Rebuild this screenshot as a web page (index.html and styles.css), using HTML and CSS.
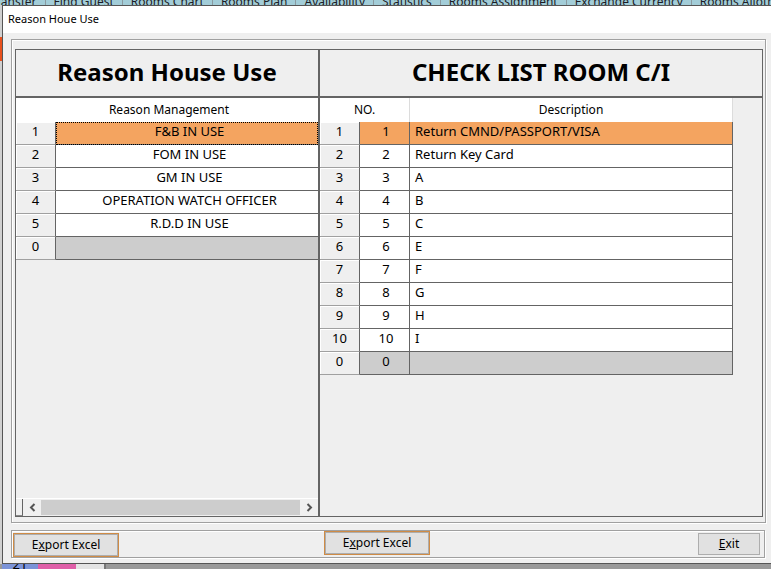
FILE: index.html
```html
<!DOCTYPE html>
<html lang="en">
<head>
<meta charset="utf-8">
<title>Reason Houe Use</title>
<link rel="stylesheet" href="styles.css">
</head>
<body>
<nav class="menu">
  <a href="#">Transfer</a><a href="#">Find Guest</a><a href="#">Rooms Chart</a><a href="#">Rooms Plan</a><a href="#">Availability</a><a href="#">Statistics</a><a href="#">Rooms Assignment</a><a href="#">Exchange Currency</a><a href="#">Rooms Allotment</a>
</nav>
<div class="middle">
  <div class="behind"><span class="mark"></span></div>
  <main class="dialog">
    <h1 class="titlebar">Reason Houe Use</h1>
    <div class="content">
      <section class="group lists">
        <div class="panels">
          <section class="panel reasons">
            <h2>Reason House Use</h2>
            <div class="body">
              <table>
                <colgroup><col class="c-head"><col></colgroup>
                <thead><tr><th colspan="2">Reason Management</th></tr></thead>
                <tbody>
                  <tr class="selected focus"><th>1</th><td>F&amp;B IN USE</td></tr>
                  <tr><th>2</th><td>FOM IN USE</td></tr>
                  <tr><th>3</th><td>GM IN USE</td></tr>
                  <tr><th>4</th><td>OPERATION WATCH OFFICER</td></tr>
                  <tr><th>5</th><td>R.D.D IN USE</td></tr>
                  <tr class="blank"><th>0</th><td></td></tr>
                </tbody>
              </table>
              <div class="scroll">
                <span class="split"></span>
                <button type="button" aria-label="Scroll left"><svg width="7" height="9" viewBox="0 0 7 9"><path d="M5.500 1 2 4.500 5.500 8"/></svg></button>
                <span class="thumb"></span>
                <button type="button" aria-label="Scroll right"><svg width="7" height="9" viewBox="0 0 7 9"><path d="M1.500 1 5 4.500 1.500 8"/></svg></button>
              </div>
            </div>
          </section>
          <section class="panel checks">
            <h2>CHECK LIST ROOM C/I</h2>
            <div class="body">
              <table>
                <colgroup><col class="c-head"><col class="c-no"><col></colgroup>
                <thead><tr><th colspan="2">NO.</th><th>Description</th></tr></thead>
                <tbody>
                  <tr class="selected"><th>1</th><td>1</td><td>Return CMND/PASSPORT/VISA</td></tr>
                  <tr><th>2</th><td>2</td><td>Return Key Card</td></tr>
                  <tr><th>3</th><td>3</td><td>A</td></tr>
                  <tr><th>4</th><td>4</td><td>B</td></tr>
                  <tr><th>5</th><td>5</td><td>C</td></tr>
                  <tr><th>6</th><td>6</td><td>E</td></tr>
                  <tr><th>7</th><td>7</td><td>F</td></tr>
                  <tr><th>8</th><td>8</td><td>G</td></tr>
                  <tr><th>9</th><td>9</td><td>H</td></tr>
                  <tr><th>10</th><td>10</td><td>I</td></tr>
                  <tr class="blank"><th>0</th><td>0</td><td></td></tr>
                </tbody>
              </table>
            </div>
          </section>
        </div>
      </section>
      <footer class="group actions">
        <button type="button" class="btn hot">E<u>x</u>port Excel</button>
        <button type="button" class="btn hot second">E<u>x</u>port Excel</button>
        <button type="button" class="btn exit"><u>E</u>xit</button>
      </footer>
    </div>
  </main>
</div>
<div class="below"><span class="day">21</span><span class="pink"></span><span class="pale"></span></div>
</body>
</html>
```
FILE: styles.css
```css
* { box-sizing: border-box; }
body {
  margin: 0;
  height: 100vh;
  display: flex;
  flex-direction: column;
  overflow: hidden;
  background: #999;
  color: #000;
  font: 13px/16px "Noto Sans", sans-serif;
}
.menu {
  flex: none;
  height: 5px;
  display: flex;
  overflow: hidden;
  background: #a3cdd8;
  margin-left: -18px;
  font-size: 12px;
}
.menu a {
  flex: none;
  height: 16px;
  margin-top: -6px;
  padding: 0 8px;
  border-right: 1px solid #8a9aa0;
  color: #1c1c24;
  text-decoration: none;
  white-space: nowrap;
}
.middle { flex: 1; min-height: 0; display: flex; }
.behind { flex: none; width: 2px; background: #d0d0d0; padding-top: 32px; }
.mark { display: block; height: 24px; background: #e8501c; }
.dialog {
  flex: 1;
  min-width: 0;
  display: flex;
  flex-direction: column;
  background: #efefef;
  border: solid #555;
  border-width: 1px 0 1px 1px;
}
.titlebar {
  margin: 0;
  padding: 5px;
  height: 27px;
  background: #fff;
  font: 11px/16px "Noto Sans", sans-serif;
}
.content {
  flex: 1;
  min-height: 0;
  display: flex;
  flex-direction: column;
  gap: 7px;
  padding: 6px 5px 5px 8px;
}
.group { border: 1px solid #a0a0a0; box-shadow: 1px 1px 0 #fff, inset 1px 1px 0 #fff; }
.lists { flex: 1; min-height: 0; padding: 9px 2px 5px 3px; }
.panels { height: 100%; display: grid; grid-template-columns: 305px 1fr; }
.panel {
  display: flex;
  flex-direction: column;
  min-width: 0;
  border: solid #646464;
  border-width: 1px 0 1px 1px;
}
.panel + .panel { border-width: 1px 1px 1px 0; }
.reasons { border-right-width: 2px; }
h2 {
  margin: 0;
  height: 48px;
  border-bottom: 2px solid #646464;
  font: bold 24px/44px "Noto Sans", sans-serif;
  text-align: center;
}
.body { flex: 1; display: flex; flex-direction: column; justify-content: space-between; align-items: flex-start; }
table { border-collapse: separate; border-spacing: 0; table-layout: fixed; width: 100%; }
.checks table { width: calc(100% - 29px); }
.c-head { width: 40px; }
.c-no { width: 50px; }
th, td { padding: 0; text-align: center; font-weight: normal; white-space: nowrap; }
thead th { height: 24px; background: #fff; border-right: 1px solid #dcdcdc; font-size: 12px; }
.reasons thead th { border-right: 0; padding-left: 4px; }
tbody th {
  height: 23px;
  padding-bottom: 5px;
  background: #efefef;
  border-bottom: 1px solid #a0a0a0;
  border-right: 1px solid #646464;
  box-shadow: inset 1px 1px 0 #fff;
}
tbody td { height: 23px; padding-bottom: 4px; background: #fff; border-bottom: 1px solid #646464; }
.reasons td { padding-left: 5px; }
.checks td { border-right: 1px solid #646464; padding-left: 3px; }
.checks td:last-child { text-align: left; padding-left: 5px; }
.selected td { background: #f4a460; }
.focus td { outline: 1px dotted #000; outline-offset: -1px; }
.blank td { background: #cdcdcd; }
.scroll { width: 100%; height: 18px; border-top: 1px solid #fff; display: flex; }
.split { width: 7px; border-right: 1px solid #646464; border-bottom: 1px solid #888; }
.scroll button { width: 18px; padding: 0; border: 0; background: #f0f0f0; display: grid; place-items: center; }
.scroll svg { fill: none; stroke: #555; stroke-width: 2; }
.thumb { flex: 1; height: 15px; margin-top: 1px; background: #cdcdcd; }
.actions { flex: none; height: 28px; margin-right: 1px; display: flex; align-items: flex-start; padding: 2px 4px 0 1px; }
.btn {
  flex: none;
  width: 106px;
  height: 24px;
  padding: 0 0 1px;
  border: 1px solid #adadad;
  background: #e1e1e1;
  color: #000;
  font: inherit;
  font-size: 12px;
}
.hot { border-color: #cf8b45; box-shadow: inset 0 0 0 1px #adadad; }
.second { margin: -2px 0 0 205px; }
.exit { width: 62px; height: 22px; margin-left: auto; }
.below { flex: none; height: 5px; display: flex; overflow: hidden; padding-left: 2px; }
.day { width: 36px; background: #7b93d8; text-align: center; line-height: 0; }
.pink { width: 38px; background: #df5fa8; }
.pale { width: 30px; background: #e4e4e4; border-right: 2px solid #777; }
```
